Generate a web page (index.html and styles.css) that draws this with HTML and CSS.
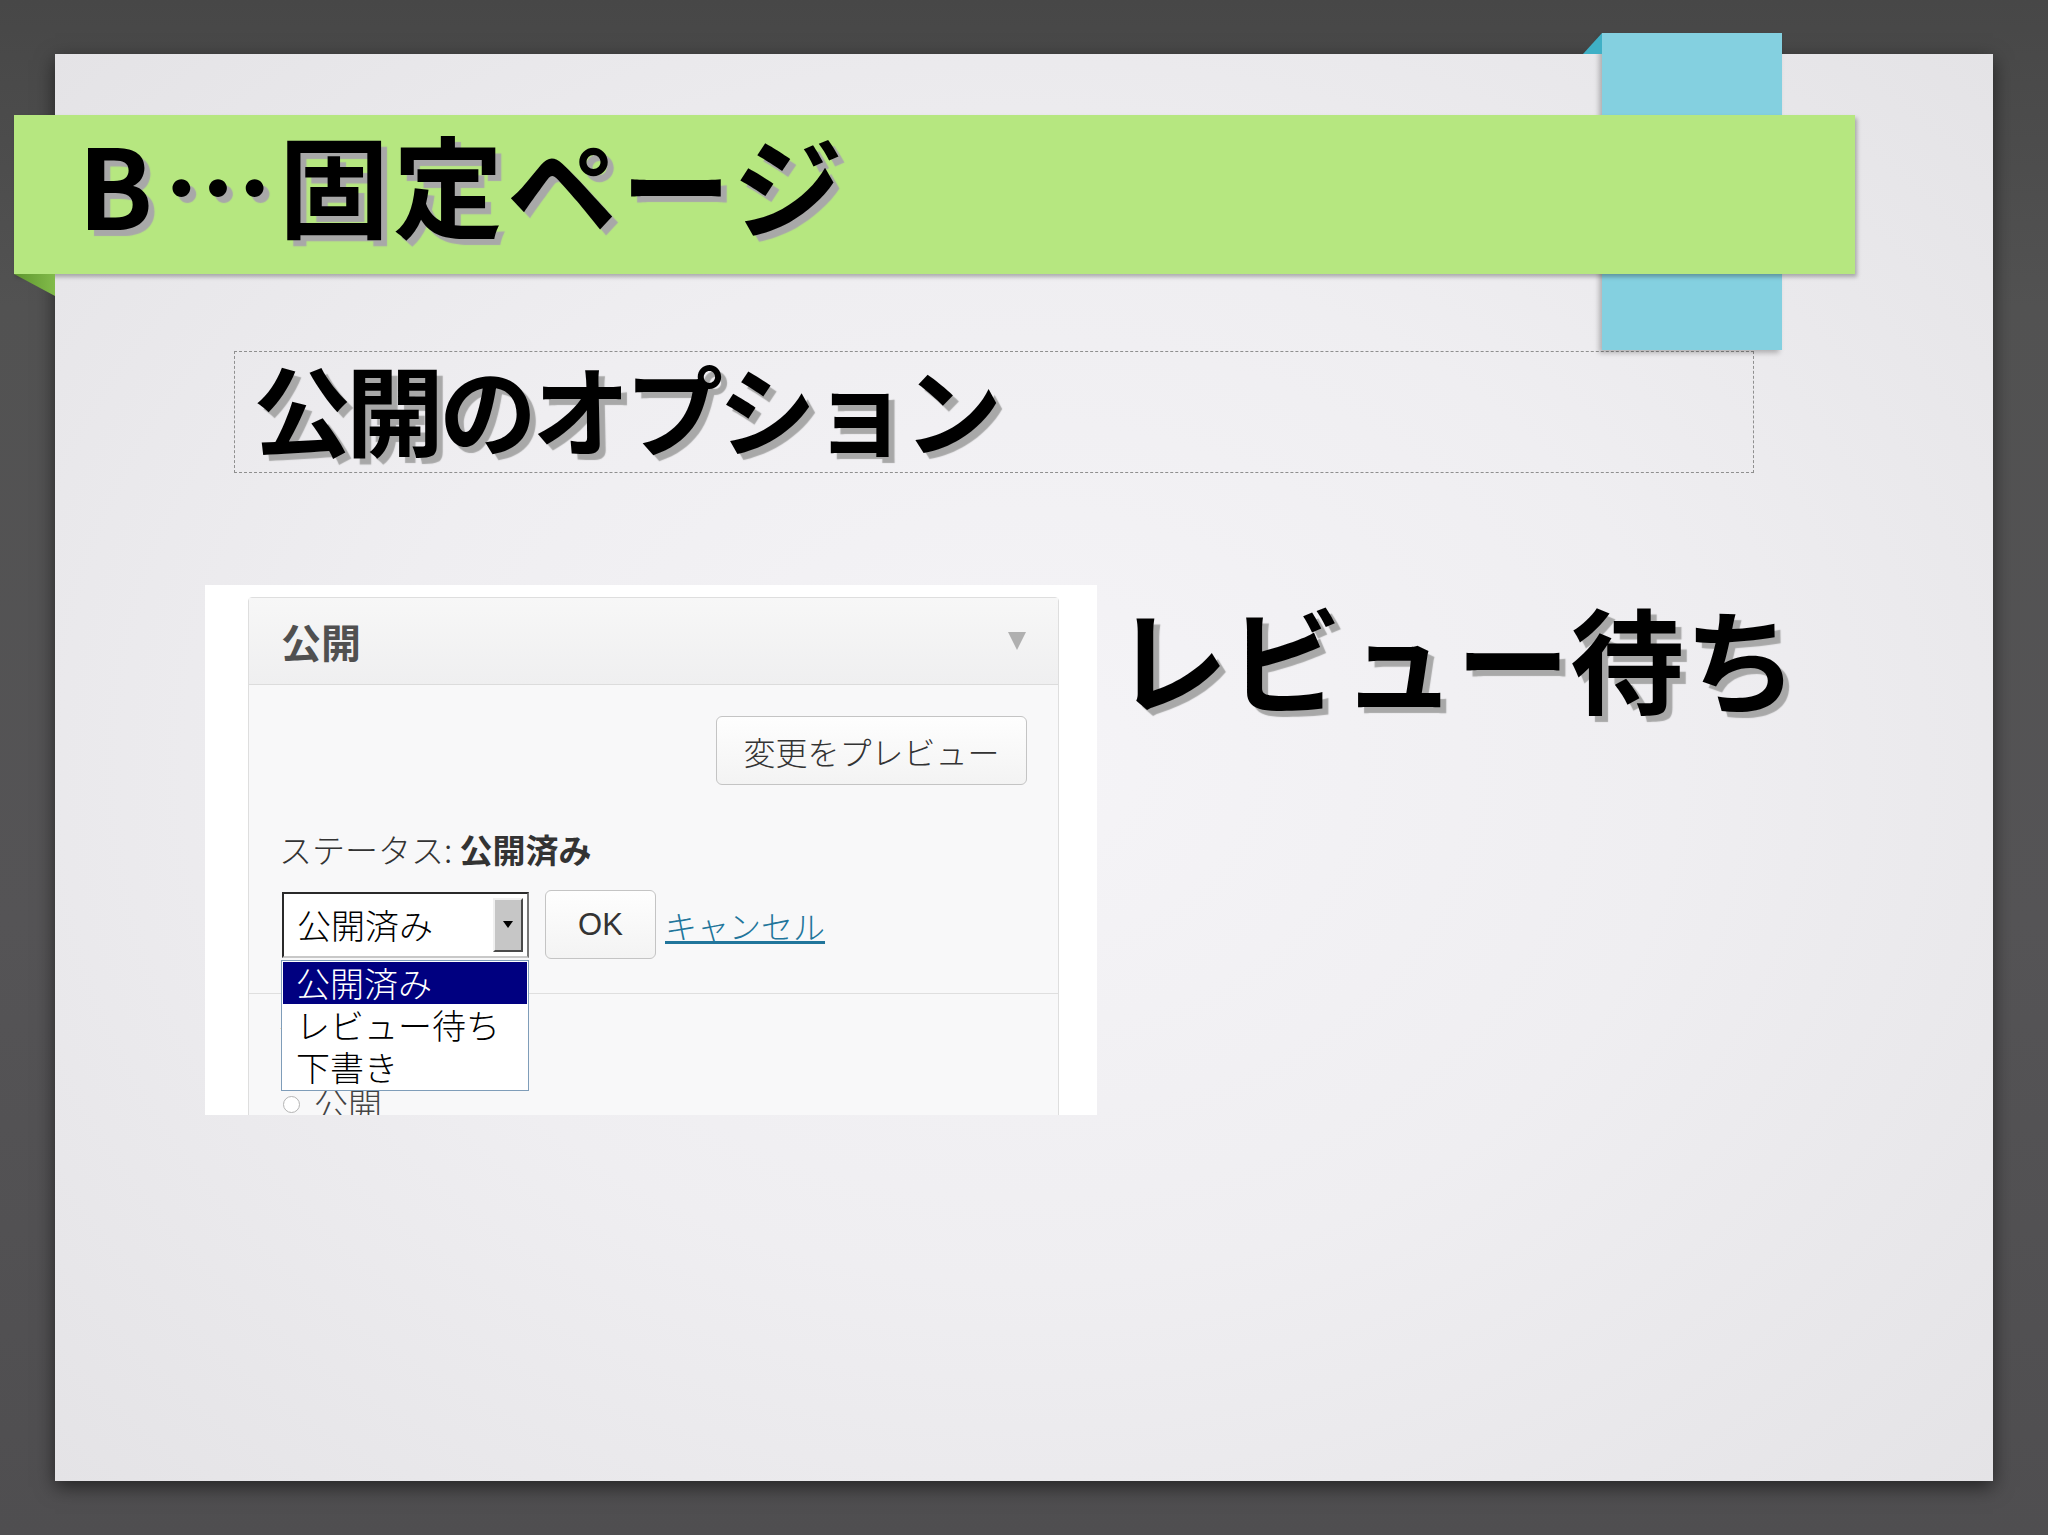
FILE: index.html
```html
<!DOCTYPE html>
<html lang="ja">
<head>
<meta charset="utf-8">
<title>B…固定ページ</title>
<link rel="stylesheet" href="styles.css">
</head>
<body>
<div class="stage">
  <div class="slide">
    <div class="tab"></div>
    <header class="banner"><h1 class="banner-title">B<span class="dots">…</span>固定ページ</h1></header>
    <div class="subtitle"><h2 class="subtitle-text">公開のオプション</h2></div>
    <div class="content">
      <div class="shot">
        <div class="postbox">
          <div class="pb-head"><span class="pb-title">公開</span><span class="pb-arrow"></span></div>
          <div class="pb-body">
            <div class="preview-row"><button class="btn preview">変更をプレビュー</button></div>
            <p class="status">ステータス: <b>公開済み</b></p>
            <div class="select-row">
              <div class="select"><span class="select-value">公開済み</span><span class="select-btn"><span class="select-caret"></span></span></div>
              <button class="btn ok">OK</button>
              <a class="cancel">キャンセル</a>
            </div>
          </div>
          <div class="pb-section">
            <p class="vis-label">公開状態: 公開</p>
            <div class="radio-row"><span class="radio"></span><span class="radio-label">公開</span></div>
          </div>
        </div>
        <ul class="dropdown">
          <li class="opt sel">公開済み</li>
          <li class="opt">レビュー待ち</li>
          <li class="opt">下書き</li>
        </ul>
      </div>
      <p class="big">レビュー待ち</p>
    </div>
  </div>
</div>
</body>
</html>
```
FILE: styles.css
```css
html, body {
  margin: 0;
  padding: 0;
}
body {
  width: 2048px;
  height: 1535px;
  overflow: hidden;
  background: linear-gradient(180deg, #474747 0%, #525252 20%, #555456 60%, #4f4e50 100%);
  font-family: "Noto Sans CJK JP", "Noto Sans", sans-serif;
}
.stage {
  padding: 54px 0 0 55px;
}
.slide {
  position: relative;
  width: 1938px;
  height: 1427px;
  box-sizing: border-box;
  padding-top: 61px;
  background: radial-gradient(ellipse 75% 80% at 50% 50%, #f5f4f7 0%, #efeef1 45%, #e2e1e4 100%);
  box-shadow: 0 6px 18px rgba(0, 0, 0, 0.55);
}
.tab {
  position: absolute;
  left: 1547px;
  top: -21px;
  width: 180px;
  height: 317px;
  background: #84d0e0;
  box-shadow: -3px 3px 5px rgba(0, 0, 0, 0.25);
  z-index: 1;
}
.tab::before {
  content: "";
  position: absolute;
  left: -19px;
  top: 0;
  width: 19px;
  height: 21px;
  background: #3fb0c6;
  clip-path: polygon(100% 0, 100% 100%, 0 100%);
}
.banner {
  position: relative;
  z-index: 2;
  margin-left: -41px;
  width: 1841px;
  height: 159px;
  box-sizing: border-box;
  padding: 12px 0 0 64px;
  background: #b6e780;
  box-shadow: 2px 3px 4px rgba(0, 0, 0, 0.28);
}
.banner::after {
  content: "";
  position: absolute;
  left: 0;
  top: 159px;
  width: 41px;
  height: 22px;
  background: linear-gradient(90deg, #5e962e, #82bb4a);
  clip-path: polygon(0 0, 100% 0, 100% 100%);
}
.banner-title {
  margin: 0;
  font-size: 110px;
  line-height: 110px;
  font-weight: 700;
  color: #000;
  letter-spacing: 4px;
  white-space: nowrap;
  text-shadow: 6px 6px 1px #a8a8a8;
}
.dots {
  margin: 0 2px 0 6px;
}
.subtitle {
  margin: 77px 0 0 179px;
  width: 1520px;
  height: 122px;
  box-sizing: border-box;
  border: 1px dashed #8f8f8f;
}
.subtitle-text {
  margin: 0;
  padding-left: 18px;
  font-size: 98px;
  line-height: 108px;
  font-weight: 700;
  color: #000;
  white-space: nowrap;
  letter-spacing: -5px;
  text-shadow: 6px 6px 1px #a8a8a8;
}
.content {
  display: flex;
  align-items: flex-start;
  margin: 112px 0 0 150px;
}
.shot {
  position: relative;
  flex: none;
  width: 892px;
  height: 530px;
  box-sizing: border-box;
  padding: 12px 0 0 43px;
  background: #fff;
  overflow: hidden;
}
.big {
  margin: 14px 0 0 17px;
  font-size: 114px;
  line-height: 113px;
  font-weight: 700;
  color: #000;
  white-space: nowrap;
  text-shadow: 6px 6px 1px #a8a8a8;
}
.postbox {
  width: 811px;
  box-sizing: border-box;
  border: 1px solid #dedede;
  border-radius: 4px 4px 0 0;
  background: #f8f8f9;
}
.pb-head {
  height: 87px;
  box-sizing: border-box;
  border-bottom: 1px solid #dcdcdc;
  background: linear-gradient(180deg, #f7f7f7, #efeff0);
  display: flex;
  align-items: center;
  justify-content: space-between;
  padding: 0 32px 0 32px;
}
.pb-title {
  font-size: 40px;
  line-height: 1;
  font-weight: 700;
  color: #505050;
}
.pb-arrow {
  width: 0;
  height: 0;
  border-left: 9px solid transparent;
  border-right: 9px solid transparent;
  border-top: 18px solid #b0b0b0;
}
.pb-body {
  padding: 31px 31px 34px 30px;
  border-bottom: 1px solid #dfdfdf;
}
.preview-row {
  display: flex;
  justify-content: flex-end;
}
.btn {
  font-family: inherit;
  background: linear-gradient(180deg, #fefefe, #f3f3f3);
  border: 1px solid #c4c4c4;
  border-radius: 6px;
  color: #333;
  padding: 0;
  box-sizing: border-box;
}
.preview {
  width: 311px;
  height: 69px;
  font-size: 32px;
  font-weight: 300;
}
.status {
  margin: 44px 0 0;
  font-size: 33px;
  line-height: 40px;
  color: #333;
  font-weight: 300;
  white-space: nowrap;
}
.status b {
  font-weight: 700;
}
.select-row {
  display: flex;
  align-items: center;
  height: 69px;
  margin-top: 21px;
  padding-left: 3px;
}
.select {
  width: 247px;
  height: 66px;
  box-sizing: border-box;
  border: 2px solid;
  border-color: #2a2a2a #777 #c8c8c8 #2a2a2a;
  background: #fff;
  display: flex;
  align-items: center;
  justify-content: space-between;
  padding: 0 4px 0 13px;
}
.select-value {
  font-size: 34px;
  line-height: 1;
  font-weight: 300;
  color: #000;
}
.select-btn {
  width: 30px;
  height: 54px;
  box-sizing: border-box;
  background: #c6c6c6;
  border: 2px solid;
  border-color: #f0f0f0 #4a4a4a #4a4a4a #f0f0f0;
  display: flex;
  align-items: center;
  justify-content: center;
}
.select-caret {
  width: 0;
  height: 0;
  border-left: 5px solid transparent;
  border-right: 5px solid transparent;
  border-top: 7px solid #000;
}
.ok {
  width: 111px;
  height: 69px;
  margin-left: 16px;
  font-family: "Liberation Sans", Arial, sans-serif;
  font-size: 31px;
  color: #333;
}
.cancel {
  margin-left: 9px;
  font-size: 32px;
  line-height: 1;
  font-weight: 300;
  color: #21759b;
  text-decoration: underline;
}
.pb-section {
  padding: 14px 30px 40px;
}
.vis-label {
  margin: 0;
  font-size: 33px;
  line-height: 40px;
  color: #333;
  font-weight: 300;
}
.radio-row {
  display: flex;
  align-items: center;
  margin-top: 36px;
  padding-left: 4px;
}
.radio {
  width: 17px;
  height: 17px;
  box-sizing: border-box;
  border: 1px solid #b4b4b4;
  border-radius: 50%;
  background: #fff;
}
.radio-label {
  margin-left: 14px;
  font-size: 34px;
  line-height: 40px;
  font-weight: 300;
  color: #444;
}
.dropdown {
  position: absolute;
  left: 76px;
  top: 375px;
  width: 248px;
  height: 131px;
  box-sizing: border-box;
  margin: 0;
  padding: 1px;
  list-style: none;
  border: 1px solid #7f9db9;
  background: #fff;
}
.opt {
  height: 42px;
  line-height: 42px;
  padding-left: 13px;
  font-size: 34px;
  font-weight: 300;
  color: #000;
  white-space: nowrap;
}
.opt.sel {
  background: #000080;
  color: #fff;
}
```
